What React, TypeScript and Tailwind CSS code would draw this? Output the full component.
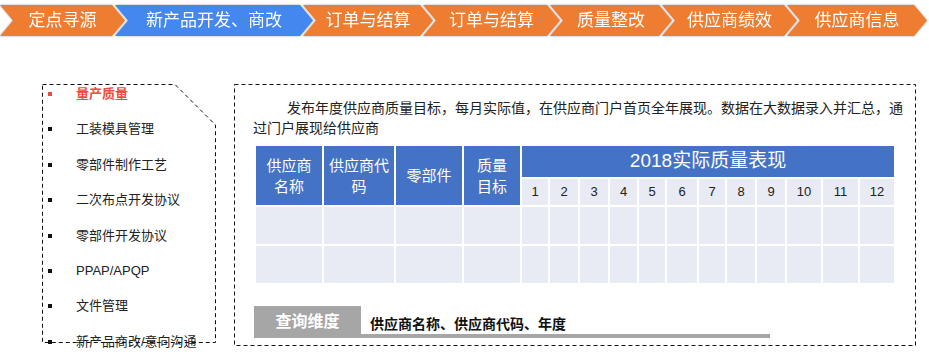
import React from "react";

const FONT = "[font-family:'Liberation_Sans','Noto_Sans_CJK_SC',sans-serif]";

type Step = { label: string; w: string; color: string };

const steps: Step[] = [
  { label: "定点寻源", w: "w-[125px]", color: "bg-[#ee7d31]" },
  { label: "新产品开发、商改", w: "w-[198px]", color: "bg-[#4487ee]" },
  { label: "订单与结算", w: "w-[130px]", color: "bg-[#ee7d31]" },
  { label: "订单与结算", w: "w-[137px]", color: "bg-[#ee7d31]" },
  { label: "质量整改", w: "w-[122px]", color: "bg-[#ee7d31]" },
  { label: "供应商绩效", w: "w-[135px]", color: "bg-[#ee7d31]" },
  { label: "供应商信息", w: "w-[140px]", color: "bg-[#ee7d31]" },
];

const menu = [
  "量产质量",
  "工装模具管理",
  "零部件制作工艺",
  "二次布点开发协议",
  "零部件开发协议",
  "PPAP/APQP",
  "文件管理",
  "新产品商改/意向沟通",
];

const months = ["1", "2", "3", "4", "5", "6", "7", "8", "9", "10", "11", "12"];

function ProcessBar() {
  return (
    <div className="flex h-[31px] pt-0 [filter:drop-shadow(0_0_1px_rgba(0,0,0,0.35))]">
      {steps.map((s, i) => (
        <div
          key={i}
          className={`${s.w} ${s.color} ${i === 0 ? "" : "-ml-[10px]"} flex h-full shrink-0 items-center justify-center text-[17px] text-white [clip-path:polygon(0_0,calc(100%_-_13px)_0,100%_50%,calc(100%_-_13px)_100%,0_100%,13px_50%)]`}
        >
          {s.label}
        </div>
      ))}
    </div>
  );
}

function SideMenu() {
  return (
    <div className="relative h-[259px] w-[174px] shrink-0">
      <ul className="flex flex-col gap-[15.4px] pl-[6px] pt-0">
        {menu.map((m, i) => (
          <li key={m} className="flex h-[20px] items-center whitespace-nowrap">
            <span className={`h-[4px] w-[4px] shrink-0 ${i === 0 ? "bg-[#f0493e]" : "bg-[#111]"}`} />
            <span
              className={`ml-[24px] text-[13px] leading-[20px] ${i === 0 ? "font-bold text-[#f0493e]" : "text-[#222]"}`}
            >
              {m}
            </span>
          </li>
        ))}
      </ul>
      {/* dashed outline with the clipped top-right corner */}
      <svg className="pointer-events-none absolute inset-0" width="174" height="259" viewBox="0 0 174 259">
        <path
          d="M0.5 0.5 H133 L173.5 41 V258.5 H0.5 Z"
          fill="none"
          stroke="#111"
          strokeWidth="1"
          strokeDasharray="4 3"
        />
      </svg>
    </div>
  );
}

function QualityTable() {
  const headCell = "row-span-2 flex items-center justify-center bg-[#4472c4] text-center text-[15px] leading-[21px] text-white";
  return (
    <div className="ml-[3px] mt-[8px] grid w-[638px] grid-cols-[66px_70px_66px_56px_26px_28px_28px_27px_26px_30px_26px_28px_28px_34px_35px_34px] grid-rows-[31px_26px_37px_37px] gap-[2px] bg-white">
      <div className={headCell}>
        供应商
        <br />
        名称
      </div>
      <div className={headCell}>
        供应商代
        <br />码
      </div>
      <div className={headCell}>零部件</div>
      <div className={headCell}>
        质量
        <br />
        目标
      </div>
      <div className="col-span-12 flex items-center justify-center bg-[#4472c4] text-[19px] text-white">
        2018实际质量表现
      </div>
      {months.map((m) => (
        <div key={m} className="flex items-center justify-center bg-[#e8eaf4] text-[13px] text-[#222]">
          {m}
        </div>
      ))}
      {Array.from({ length: 32 }).map((_, i) => (
        <div key={i} className="bg-[#e8eaf4]" />
      ))}
    </div>
  );
}

function DetailPanel() {
  return (
    <div className="relative h-[262px] w-[682px] shrink-0 pl-[19px] pt-[14px]">
      <p className="whitespace-nowrap text-[14px] leading-[20px] text-[#222]">
        <span className="pl-[34px]">
          发布年度供应商质量目标，每月实际值，在供应商门户首页全年展现。数据在大数据录入并汇总，通
        </span>
        <br />
        过门户展现给供应商
      </p>
      <QualityTable />
      <div className="ml-[1px] mt-[23px] flex h-[32px] items-stretch">
        <div className="flex w-[107px] items-center justify-center bg-[#a6a6a6] text-[16px] font-bold text-white">
          查询维度
        </div>
        <div className="flex w-[409px] flex-col justify-end">
          <div className="pl-[9px] text-[14px] font-bold leading-[20px] text-[#111]">
            供应商名称、供应商代码、年度
          </div>
          <div className="h-[4px] bg-[#a6a6a6]" />
        </div>
      </div>
      <svg className="pointer-events-none absolute inset-0" width="682" height="262" viewBox="0 0 682 262">
        <rect
          x="0.5"
          y="0.5"
          width="681"
          height="261"
          fill="none"
          stroke="#111"
          strokeWidth="1"
          strokeDasharray="4 3"
        />
      </svg>
    </div>
  );
}

export default function App() {
  return (
    <div className={`h-[362px] w-[929px] overflow-hidden bg-white pt-[5px] ${FONT}`}>
      <ProcessBar />
      <div className="mt-[48px] flex pl-[42px]">
        <SideMenu />
        <div className="ml-[18px]">
          <DetailPanel />
        </div>
      </div>
    </div>
  );
}
